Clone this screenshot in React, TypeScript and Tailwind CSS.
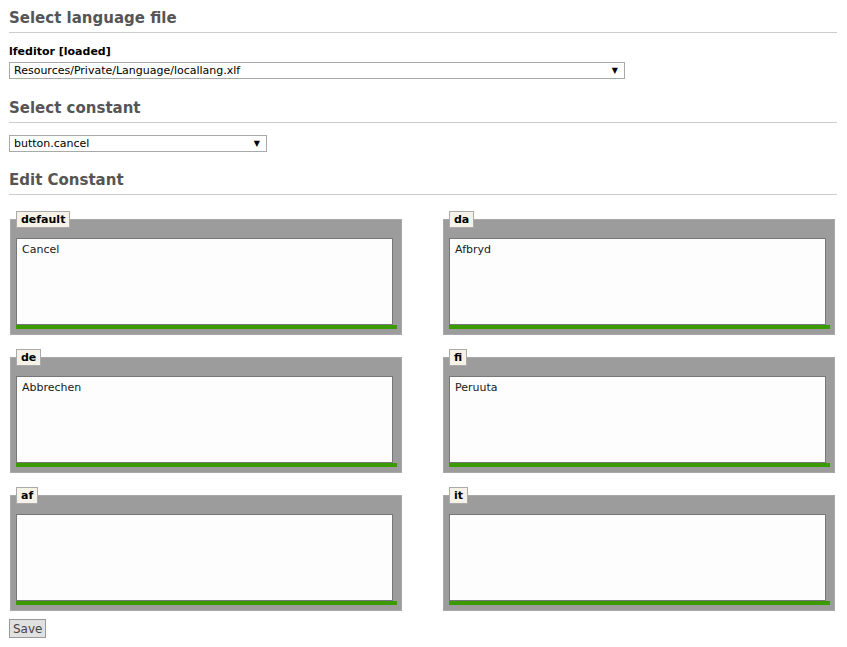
import React from "react";

type Lang = { key: string; value: string };

const langs: Lang[] = [
  { key: "default", value: "Cancel" },
  { key: "da", value: "Afbryd" },
  { key: "de", value: "Abbrechen" },
  { key: "fi", value: "Peruuta" },
  { key: "af", value: "" },
  { key: "it", value: "" },
];

const font = "font-['Tahoma','DejaVu_Sans','Liberation_Sans',sans-serif]";

function Heading({ children }: { children: React.ReactNode }) {
  return (
    <div className="mr-[10px] border-b border-[#cccccc] pb-[5px]">
      <h2 className="text-[15px] font-bold leading-[18px] text-[#555555]">{children}</h2>
    </div>
  );
}

function FakeSelect({ value, width }: { value: string; width: string }) {
  return (
    <div
      className={`flex h-[17px] items-center justify-between border border-[#a9a9a9] bg-white pl-[4px] pr-[6px] text-[11px] text-black ${width}`}
    >
      <span className="leading-none">{value}</span>
      <span className="text-[8px] leading-none">▼</span>
    </div>
  );
}

function LangBox({ lang }: { lang: Lang }) {
  return (
    <div className="relative mt-[8px]">
      <div className="absolute left-[6px] top-[-8px] z-10 border border-[#aaaaaa] bg-[#f6f2e8] px-[4px] text-[11px] font-bold leading-[15px] text-black">
        {lang.key}
      </div>
      <div className="h-[116px] border border-[#a8a8a8] bg-[#9c9c9c] pl-[5px] pr-[4px] pt-[18px]">
        <div className="mr-[4px] h-[87px] border border-[#777777] bg-[#fdfdfd] px-[5px] py-[3px] text-[11px] leading-[15px] text-[#1a1a1a]">
          {lang.value}
        </div>
        <div className="h-[4px] bg-[#3a9a00]" />
      </div>
    </div>
  );
}

export default function App() {
  return (
    <div className={`min-h-[647px] w-[847px] bg-white pl-[9px] pt-[9px] ${font}`}>
      <Heading>Select language file</Heading>
      <div className="mt-[11px] text-[11px] font-bold leading-[15px] text-black">lfeditor [loaded]</div>
      <div className="mt-[3px]">
        <FakeSelect value="Resources/Private/Language/locallang.xlf" width="w-[616px]" />
      </div>

      <div className="mt-[20px]">
        <Heading>Select constant</Heading>
      </div>
      <div className="mt-[12px]">
        <FakeSelect value="button.cancel" width="w-[258px]" />
      </div>

      <div className="mt-[19px]">
        <Heading>Edit Constant</Heading>
      </div>

      <div className="ml-[1px] mt-[16px] grid grid-cols-[392px_392px] gap-x-[41px] gap-y-[14px]">
        {langs.map((l) => (
          <LangBox key={l.key} lang={l} />
        ))}
      </div>

      <button
        type="button"
        className="mt-[8px] h-[19px] border border-[#999999] bg-[#e1e1e1] px-[3px] text-[12px] leading-none text-[#444444]"
      >
        Save
      </button>
    </div>
  );
}
